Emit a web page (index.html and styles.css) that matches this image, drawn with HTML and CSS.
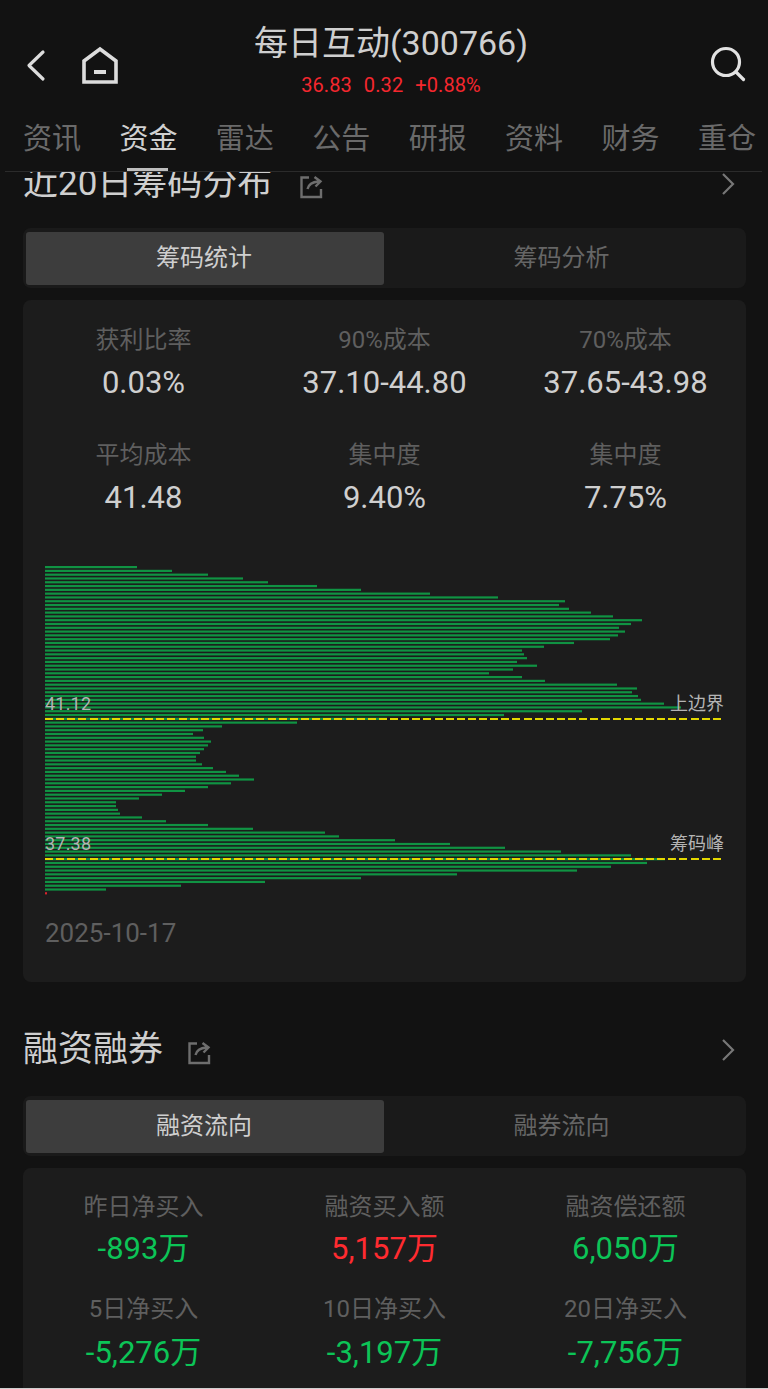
FILE: index.html
```html
<!DOCTYPE html>
<html lang="zh-CN">
<head>
<meta charset="utf-8">
<title>每日互动(300766)</title>
<link rel="stylesheet" href="styles.css">
</head>
<body>
<div class="page">
  <header class="header">
    <div class="topbar">
      <div class="top-left">
        <svg class="ico-back" width="24" height="34" viewBox="0 0 24 34"><path d="M19 4 5 17.5 19 31"/></svg>
        <svg class="ico-home" width="38" height="40" viewBox="0 0 38 40"><path d="M3 36V15L19 3l16 12v21Z"/><path class="dash" d="M13 26h12"/></svg>
      </div>
      <div class="top-center">
        <div class="stock-name">每日互动(300766)</div>
        <div class="stock-quote"><span>36.83</span><span>0.32</span><span>+0.88%</span></div>
      </div>
      <div class="top-right">
        <svg class="ico-search" width="38" height="40" viewBox="0 0 38 40"><circle cx="17" cy="17" r="13.5"/><path d="M27 27l7.5 7.5"/></svg>
      </div>
    </div>
    <nav class="nav">
      <a>资讯</a><a class="on">资金</a><a>雷达</a><a>公告</a><a>研报</a><a>资料</a><a>财务</a><a>重仓</a>
    </nav>
    <div class="nav-rule"></div>
  </header>

  <main class="main">
    <section class="section first">
      <div class="sec-head">
        <h2>近20日筹码分布</h2>
        <svg class="ico-share" width="24" height="24" viewBox="0 0 24 24"><path d="M10 2.500H2.500V22H22v-8"/><path d="M8.500 14c1-4.500 5-7 11-7.500M15.500 2l6 4.500-5 5"/></svg>
        <svg class="ico-more" width="14" height="24" viewBox="0 0 14 24"><path d="M2 2l10 10L2 22"/></svg>
      </div>
      <div class="tabs"><div class="tab on">筹码统计</div><div class="tab">筹码分析</div></div>
      <div class="card chip-card">
        <div class="stats">
          <div class="stat"><div class="label">获利比率</div><div class="value">0.03%</div></div>
          <div class="stat"><div class="label">90%成本</div><div class="value">37.10-44.80</div></div>
          <div class="stat"><div class="label">70%成本</div><div class="value">37.65-43.98</div></div>
          <div class="stat"><div class="label">平均成本</div><div class="value">41.48</div></div>
          <div class="stat"><div class="label">集中度</div><div class="value">9.40%</div></div>
          <div class="stat"><div class="label">集中度</div><div class="value">7.75%</div></div>
        </div>
        <div class="chart">
          <svg class="bars" width="680" height="330" viewBox="0 0 680 87" preserveAspectRatio="none">
            <rect y="0" width="92"/><rect y="1" width="127"/><rect y="2" width="163"/><rect y="3" width="198"/><rect y="4" width="223"/><rect y="5" width="272"/><rect y="6" width="316"/><rect y="7" width="385"/><rect y="8" width="453"/><rect y="9" width="520"/>
            <rect y="10" width="514"/><rect y="11" width="524"/><rect y="12" width="546"/><rect y="13" width="568"/><rect y="14" width="597"/><rect y="15" width="586"/><rect y="16" width="574"/><rect y="17" width="580"/><rect y="18" width="573"/><rect y="19" width="565"/>
            <rect y="20" width="529"/><rect y="21" width="499"/><rect y="22" width="477"/><rect y="23" width="479"/><rect y="24" width="482"/><rect y="25" width="472"/><rect y="26" width="492"/><rect y="27" width="468"/><rect y="28" width="444"/><rect y="29" width="477"/>
            <rect y="30" width="500"/><rect y="31" width="572"/><rect y="32" width="592"/><rect y="33" width="587"/><rect y="34" width="593"/><rect y="35" width="596"/><rect y="36" width="619"/><rect y="37" width="636"/><rect y="38" width="537"/><rect y="39" width="459"/>
            <rect y="40" width="342"/><rect y="41" width="252"/><rect y="42" width="177"/><rect y="43" width="158"/><rect y="44" width="148"/><rect y="45" width="159"/><rect y="46" width="166"/><rect y="47" width="163"/><rect y="48" width="159"/><rect y="49" width="155"/>
            <rect y="50" width="151"/><rect y="51" width="151"/><rect y="52" width="157"/><rect y="53" width="168"/><rect y="54" width="181"/><rect y="55" width="194"/><rect y="56" width="209"/><rect y="57" width="186"/><rect y="58" width="163"/><rect y="59" width="140"/>
            <rect y="60" width="117"/><rect y="61" width="94"/><rect y="62" width="71"/><rect y="63" width="71"/><rect y="64" width="73"/><rect y="65" width="75"/><rect y="66" width="97"/><rect y="67" width="121"/><rect y="68" width="163"/><rect y="69" width="208"/>
            <rect y="70" width="280"/><rect y="71" width="294"/><rect y="72" width="350"/><rect y="73" width="405"/><rect y="74" width="460"/><rect y="75" width="516"/><rect y="76" width="586"/><rect y="77" width="620"/><rect y="78" width="602"/><rect y="79" width="566"/>
            <rect y="80" width="532"/><rect y="81" width="412"/><rect y="82" width="316"/><rect y="83" width="220"/><rect y="84" width="136"/><rect y="85" width="61"/><rect class="tick" y="86" width="2"/>
          </svg>
          <div class="mark mark-upper"><span class="mark-price">41.12</span><span class="mark-name">上边界</span><i class="mark-line"></i></div>
          <div class="mark mark-peak"><span class="mark-price">37.38</span><span class="mark-name">筹码峰</span><i class="mark-line"></i></div>
        </div>
        <div class="date">2025-10-17</div>
      </div>
    </section>

    <section class="section second">
      <div class="sec-head">
        <h2>融资融券</h2>
        <svg class="ico-share" width="24" height="24" viewBox="0 0 24 24"><path d="M10 2.500H2.500V22H22v-8"/><path d="M8.500 14c1-4.500 5-7 11-7.500M15.500 2l6 4.500-5 5"/></svg>
        <svg class="ico-more" width="14" height="24" viewBox="0 0 14 24"><path d="M2 2l10 10L2 22"/></svg>
      </div>
      <div class="tabs"><div class="tab on">融资流向</div><div class="tab">融券流向</div></div>
      <div class="card margin-card">
        <div class="flows">
          <div class="flow"><div class="label">昨日净买入</div><div class="amount down">-893万</div></div>
          <div class="flow"><div class="label">融资买入额</div><div class="amount up">5,157万</div></div>
          <div class="flow"><div class="label">融资偿还额</div><div class="amount down">6,050万</div></div>
          <div class="flow"><div class="label">5日净买入</div><div class="amount down">-5,276万</div></div>
          <div class="flow"><div class="label">10日净买入</div><div class="amount down">-3,197万</div></div>
          <div class="flow"><div class="label">20日净买入</div><div class="amount down">-7,756万</div></div>
        </div>
      </div>
    </section>
  </main>
</div>
</body>
</html>
```
FILE: styles.css
```css
* { box-sizing: border-box; }
html, body { margin: 0; padding: 0; }
body {
  width: 768px;
  height: 1389px;
  overflow: hidden;
  background: #cfcfcf;
  font-family: Roboto, "Noto Sans CJK SC", sans-serif;
  color: #d2d2d2;
}
.page {
  width: 768px;
  height: 1388px;
  background: #121212;
  display: flex;
  flex-direction: column;
  overflow: hidden;
}
svg { display: block; fill: none; }

/* header */
.header { flex: none; position: relative; z-index: 1; height: 172px; background: #121212; }
.topbar {
  display: grid;
  grid-template-columns: 228px 1fr 214px;
  height: 116px;
}
.top-left { display: flex; align-items: flex-start; padding: 47px 0 0 24px; gap: 33px; }
.ico-back { margin-top: 1px; }
.ico-back path { stroke: #dcdcdc; stroke-width: 3.2; stroke-linecap: round; stroke-linejoin: round; }
.ico-home { margin-top: -1px; }
.ico-home path { stroke: #dcdcdc; stroke-width: 3.6; }
.ico-home .dash { stroke-width: 4; }
.top-center { padding-top: 22px; text-align: center; }
.stock-name { font-size: 34px; line-height: 42px; color: #cfcfcf; white-space: nowrap; }
.stock-quote {
  margin-top: 10px;
  display: flex;
  justify-content: center;
  gap: 12px;
  font-size: 20px;
  letter-spacing: 0.1px;
  line-height: 22px;
  color: #f5272e;
}
.top-right { display: flex; justify-content: flex-end; padding: 45px 21px 0 0; }
.ico-search circle, .ico-search path { stroke: #e2e2e2; stroke-width: 3.2; stroke-linecap: round; }
.nav {
  display: flex;
  justify-content: space-between;
  padding: 1px 12px 0 23px;
  font-size: 29px;
  line-height: 44px;
  color: #6a6a6a;
}
.nav a { position: relative; white-space: nowrap; }
.nav a.on { color: #d0d0d0; }
.nav a.on::after {
  content: "";
  position: absolute;
  left: 8px;
  width: 41px;
  bottom: -10px;
  height: 3px;
  background: #bdbdbd;
}
.nav-rule { height: 1px; margin: 10px 6px 0 5px; background: #2b2b2b; }

/* content */
.main { flex: 1; min-height: 0; overflow: hidden; padding: 0 22px 0 23px; }
.section { margin-bottom: 46px; }
.section.first { margin-top: -10px; }
.sec-head { display: flex; align-items: center; height: 44px; margin-bottom: 24px; }
.first .sec-head { margin-bottom: 22px; }
.sec-head h2 { margin: 0; font-size: 35px; line-height: 44px; font-weight: 400; color: #cfcfcf; white-space: nowrap; }
.ico-share { margin: 6px 0 0 27px; }
.second .ico-share { margin-left: 24px; }
.ico-share path { stroke: #6e6e6e; stroke-width: 2.400; }
.ico-more { margin-left: auto; margin-right: 11px; }
.ico-more path { stroke: #777; stroke-width: 2.200; }

.tabs {
  display: flex;
  height: 60px;
  padding: 4px 3px 3px;
  background: #1a1a1a;
  border-radius: 8px;
  font-size: 24px;
  line-height: 53px;
  color: #666;
  text-align: center;
}
.tab { flex: 1; border-radius: 3px; padding-right: 4px; }
.tab:first-child { flex: none; width: 358px; padding-right: 2px; }
.tab.on { background: #3d3d3d; color: #cfcfcf; }

.card { margin-top: 12px; background: #1c1c1c; border-radius: 8px; }
.chip-card { height: 682px; padding: 23px 0 0; }
.stats { display: grid; grid-template-columns: repeat(3, 241px); row-gap: 36px; text-align: center; }
.label { font-size: 24px; line-height: 34px; color: #5f5f5f; white-space: nowrap; }
.value { margin-top: 7px; font-size: 31px; line-height: 38px; color: #cfcfcf; white-space: nowrap; }

.chart { position: relative; margin: 49px 0 0 22px; width: 680px; height: 330px; }
.bars rect { height: 0.58px; x: 0; fill: #109343; }
.bars rect.tick { fill: #d8242c; }
.mark { position: absolute; left: 0; width: 680px; }
.mark-upper { top: 125px; }
.mark-peak { top: 265px; }
.mark-price, .mark-name { position: absolute; top: 1px; font-size: 18px; line-height: 24px; color: #b4b4b4; }
.mark-price { left: 0; letter-spacing: 0.2px; }
.mark-name { right: 1px; white-space: nowrap; }
.mark-line {
  position: absolute;
  left: 0;
  top: 27px;
  width: 676px;
  height: 2px;
  background: repeating-linear-gradient(90deg, #e4d800 0 8px, transparent 8px 11.13px);
}
.date { margin: 21px 0 0 22px; font-size: 26px; line-height: 32px; color: #5f5f5f; }

.margin-card { height: 240px; padding-top: 24px; }
.flows { display: grid; grid-template-columns: repeat(3, 241px); row-gap: 27px; text-align: center; }
.flow .label { line-height: 30px; }
.amount { margin-top: 9px; font-size: 31px; line-height: 36px; white-space: nowrap; }
.flow:nth-child(n+4) .amount { margin-top: 11px; }
.amount.down { color: #0cc457; }
.amount.up { color: #ff2b30; }
```
